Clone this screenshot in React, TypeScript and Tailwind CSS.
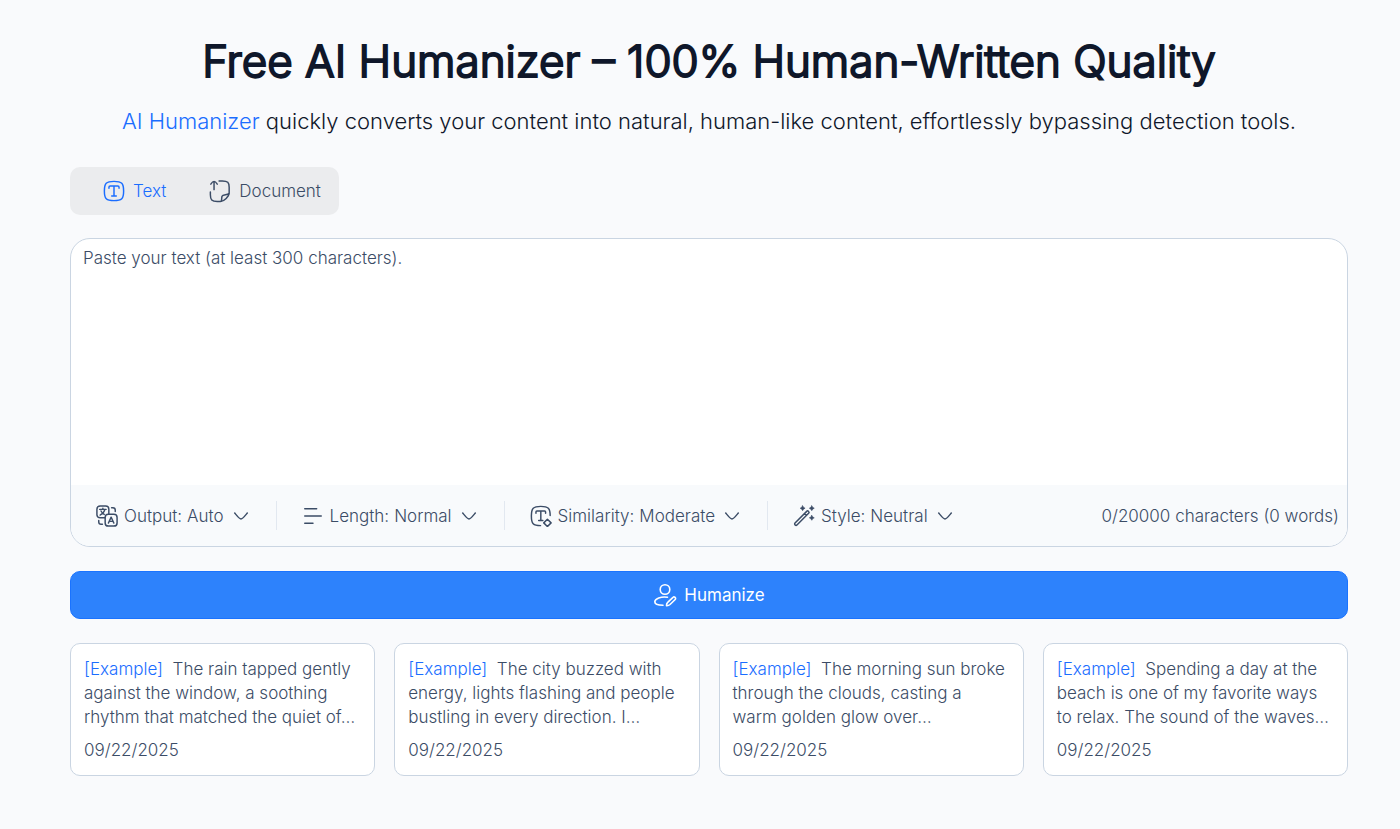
import { useState, type ReactNode } from "react";

function Icon({ className = "size-[22px]", children }: { className?: string; children: ReactNode }) {
  return (
    <svg
      aria-hidden="true"
      viewBox="0 0 24 24"
      fill="none"
      stroke="currentColor"
      strokeWidth="1.6"
      strokeLinecap="round"
      strokeLinejoin="round"
      className={`${className} shrink-0`}
    >
      {children}
    </svg>
  );
}

const TextIcon = () => (
  <Icon>
    <path d="M1.500 12C1.500 3.500 3.500 1.500 12 1.500S22.500 3.500 22.500 12 20.500 22.500 12 22.500 1.500 20.500 1.500 12Z" />
    <path d="M6.500 9V7.800C6.500 7 7 6.500 7.800 6.500H16.200C17 6.500 17.500 7 17.500 7.800V9M12 6.500V17.500M9.500 17.500H14.500" />
  </Icon>
);

const DocumentIcon = () => (
  <Icon className="h-6 w-[22px]">
    <path d="M11 1H14.500C20.500 1 22 2.500 22 8V14C22 18 16.500 23.500 12.500 23.500H9C3 23.500 1.500 21.500 1.500 16V13" />
    <path d="M13.500 23C14 21 13.700 19.500 14.200 17.800C15 15.500 19 16.500 21.800 15" />
    <path d="M5.500 10.500V1.500M2 4.500C3 3 4.200 1.500 5.500 1.500S8 3 9 4.500" />
  </Icon>
);

const TranslateIcon = () => (
  <Icon>
    <rect x="1" y="1" width="13" height="13" rx="3.500" />
    <path d="M4 4.800H11M7.500 3.600V4.800M9.800 4.800C9 7.500 7 9.800 4.500 11M5.500 6.500C6.500 8.500 7.500 9.500 9 10.300" strokeWidth="1.500" />
    <rect x="10" y="10" width="13" height="13" rx="3.500" fill="#f8fafc" />
    <path d="M13.500 19.800L16.500 13.200L19.500 19.800M14.500 17.800H18.500" strokeWidth="1.500" />
    <path d="M17 3H18.500C20.200 3 21 3.800 21 5.500V7M3 17V18.500C3 20.200 3.800 21 5.500 21H7" />
  </Icon>
);

const LengthIcon = () => (
  <Icon>
    <path d="M3 4H16M3 12H21M3 20H12" />
  </Icon>
);

const SimilarityIcon = () => (
  <Icon>
    <path d="M22 11.500C22 3.500 20 1.500 11.800 1.500S1.500 3.500 1.500 12 3.500 22.500 11.500 22.500" />
    <path d="M6.500 9V7.500C6.500 7 7 6.500 7.500 6.500H16C16.500 6.500 17 7 17 7.500V9M11.800 6.500V17M9.500 17H14" />
    <path d="M19 15.500L23 19.500L19 23.500L15 19.500Z" />
  </Icon>
);

const WandIcon = () => (
  <Icon>
    <path d="M15.200 6.700C16.200 5.700 18.300 7.800 17.300 8.800L4.300 21.800C3 23.100 0.900 21 2.200 19.700ZM12.500 9.500L14.500 11.500" />
    <g fill="currentColor" strokeWidth="0.600">
      <path d="M10.500 0.800L11.500 2.500L13.200 3.500L11.500 4.500L10.500 6.200L9.500 4.500L7.800 3.500L9.500 2.500Z" />
      <path d="M20.500 0.800L21.500 2.500L23.200 3.500L21.500 4.500L20.500 6.200L19.500 4.500L17.800 3.500L19.500 2.500Z" />
      <path d="M20.500 11.300L21.500 13L23.200 14L21.500 15L20.500 16.700L19.500 15L17.800 14L19.500 13Z" />
    </g>
  </Icon>
);

const HumanizeIcon = () => (
  <Icon className="size-6">
    <circle cx="12" cy="6.500" r="4.800" />
    <path d="M14.500 14.200C8 13.300 1.800 15.500 1.800 18.800C1.800 21.300 5 22.300 10 22.300" />
    <path d="M20 14.300C21.300 13 23.500 15.200 22.200 16.500L17 21.500C16 22.400 14.800 22.700 13.500 22.600C13.400 21.300 13.700 20.200 14.700 19.300Z" />
  </Icon>
);

const ChevronIcon = () => (
  <Icon className="pointer-events-none col-start-1 row-start-1 size-4 justify-self-end">
    <path d="M2.500 7.500C5 10.500 9.500 16.500 12 16.500S19 10.500 21.500 7.500" strokeWidth="2.200" />
  </Icon>
);

const settings = [
  { id: "output", label: "Output:", value: "Auto", icon: <TranslateIcon /> },
  { id: "length", label: "Length:", value: "Normal", icon: <LengthIcon /> },
  { id: "similarity", label: "Similarity:", value: "Moderate", icon: <SimilarityIcon /> },
  { id: "style", label: "Style:", value: "Neutral", icon: <WandIcon /> },
];

const examples = [
  "The rain tapped gently against the window, a soothing rhythm that matched the quiet of…",
  "The city buzzed with energy, lights flashing and people bustling in every direction. I…",
  "The morning sun broke through the clouds, casting a warm golden glow over…",
  "Spending a day at the beach is one of my favorite ways to relax. The sound of the waves…",
];

const tabs = [
  { name: "Text", icon: <TextIcon /> },
  { name: "Document", icon: <DocumentIcon /> },
];

export default function App() {
  const [tab, setTab] = useState("Text");
  const [text, setText] = useState("");
  const words = text.trim() ? text.trim().split(/\s+/).length : 0;

  return (
    <main className="min-h-screen bg-[#f9fafc] pt-[35px] pr-[52px] pb-12 pl-[70px] font-[Inter,sans-serif] text-[17px] leading-6 font-light text-[#3b4c66]">
      <header className="text-center text-[#0f172a]">
        <h1 className="text-[44px] leading-[52px] font-light [-webkit-text-stroke:2px_currentColor]">
          Free AI Humanizer – 100% Human-Written Quality
        </h1>
        <p className="mt-[17px] text-[22px] leading-[34px]">
          <a href="#humanizer" className="text-[#1a6dff]">AI Humanizer</a> quickly converts your content into natural,
          human-like content, effortlessly bypassing detection tools.
        </p>
      </header>

      <div role="tablist" className="mt-[29px] flex h-12 w-fit items-center gap-[43px] rounded-[10px] bg-[#ebecee] pr-[18px] pl-[33px]">
        {tabs.map(({ name, icon }) => (
          <button
            key={name}
            type="button"
            role="tab"
            aria-selected={tab === name}
            onClick={() => setTab(name)}
            className={`flex items-center gap-2 ${tab === name ? "text-[#1a6dff]" : ""}`}
          >
            {icon}
            {name}
          </button>
        ))}
      </div>

      <section id="humanizer" className="mt-[23px] overflow-hidden rounded-[20px] border border-[#cad5e2] bg-white">
        <textarea
          aria-label="Text to humanize"
          placeholder="Paste your text (at least 300 characters)."
          value={text}
          maxLength={20000}
          onChange={(e) => setText(e.target.value)}
          className="block h-[246px] w-full resize-none px-3 py-[7px] outline-none placeholder:text-[#3b4c66]"
        />
        <div className="flex items-center justify-between bg-[#f8fafc] py-4 pr-2">
          <div className="flex divide-x divide-[#e2e8f0]">
            {settings.map(({ id, label, value, icon }) => (
              <div key={id} className="flex h-[29px] items-center gap-[6px] pr-[27px] pl-[25px]">
                {icon}
                <div className="flex items-center gap-[5px]">
                  <label htmlFor={id}>{label}</label>
                  <div className="grid items-center">
                    <select
                      id={id}
                      defaultValue={value}
                      className="col-start-1 row-start-1 appearance-none bg-transparent pr-[25px] outline-none [field-sizing:content]"
                    >
                      <option>{value}</option>
                    </select>
                    <ChevronIcon />
                  </div>
                </div>
              </div>
            ))}
          </div>
          <p>{text.length}/20000 characters ({words} words)</p>
        </div>
      </section>

      <button
        type="button"
        className="mt-6 flex h-12 w-full items-center justify-center gap-[7px] rounded-[10px] border border-[#1a73ff] bg-[#2d82fc] font-normal text-white"
      >
        <HumanizeIcon />
        Humanize
      </button>

      <ul className="mt-6 grid grid-cols-4 gap-[19px]">
        {examples.map((example) => (
          <li key={example} className="rounded-[10px] border border-[#cad5e2] bg-white p-[13px]">
            <p>
              <span className="text-[#1a6dff]">[Example]</span>&nbsp; {example}
            </p>
            <p className="mt-[9px]">09/22/2025</p>
          </li>
        ))}
      </ul>
    </main>
  );
}
